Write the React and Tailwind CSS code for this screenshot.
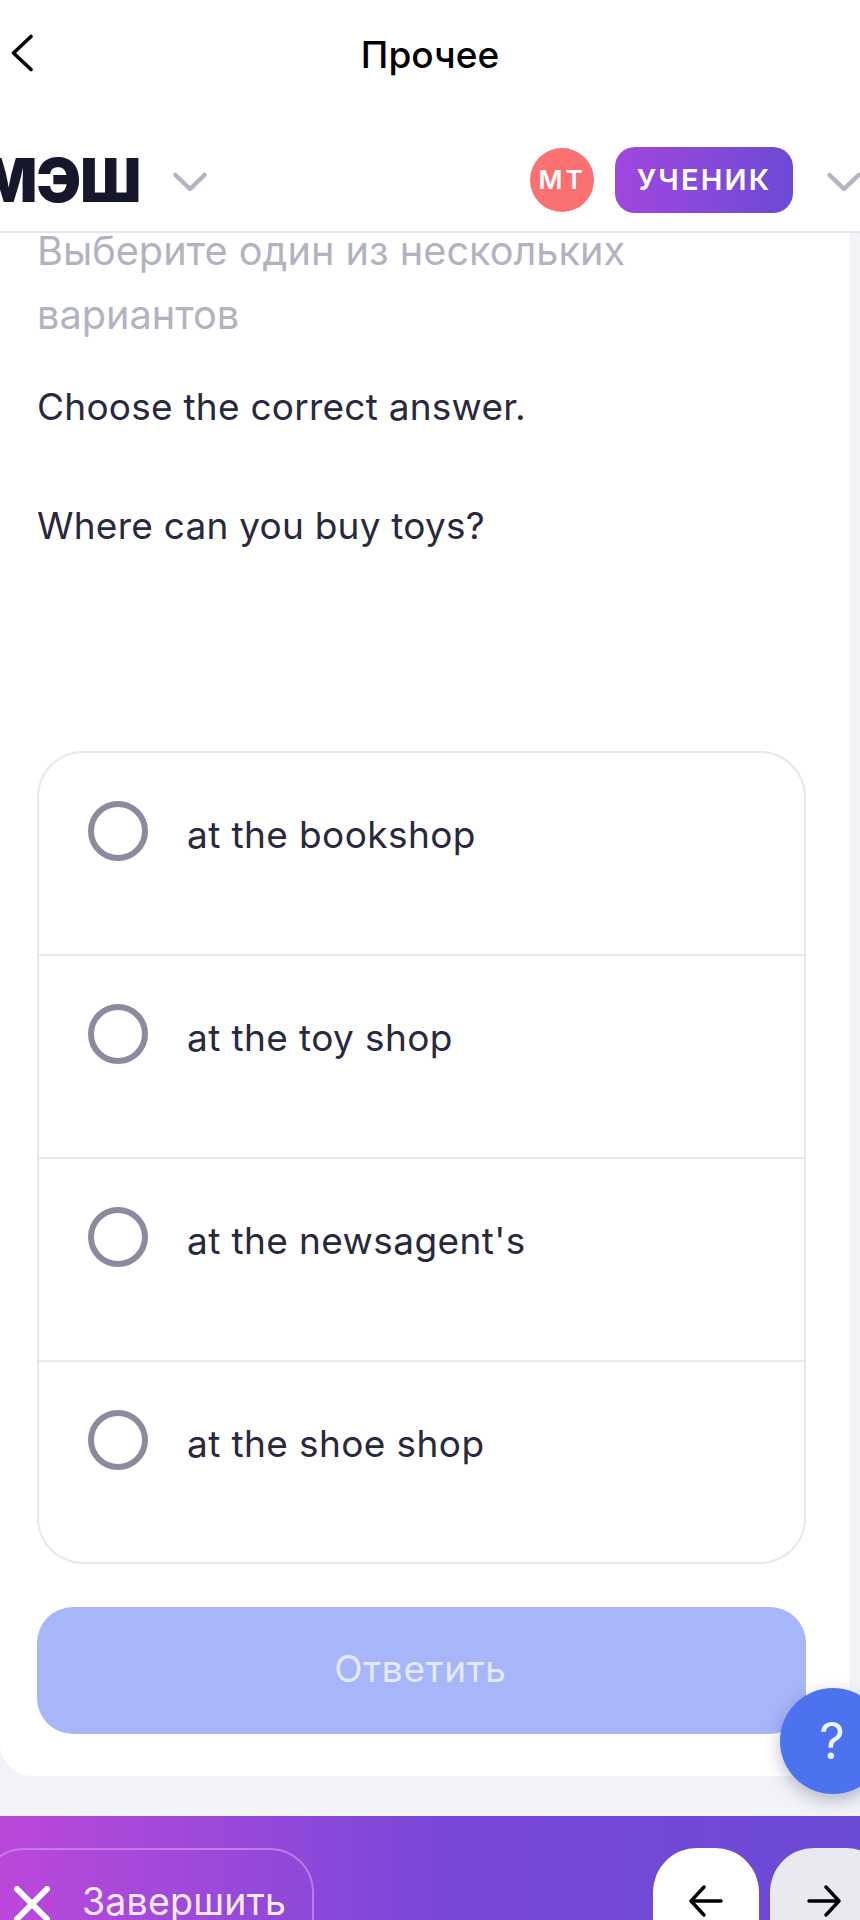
import React from 'react';

const options = ['at the bookshop', 'at the toy shop', "at the newsagent's", 'at the shoe shop'];

function Chevron({ className }) {
  return (
    <svg className={className} viewBox="0 0 34 20" fill="none" stroke="#b3b4c1" strokeWidth="4.5" strokeLinecap="round" strokeLinejoin="round">
      <path d="M2.5 3 L17 17 L31.5 3" />
    </svg>
  );
}

export default function App() {
  return (
    <div className="relative w-[860px] h-[1920px] overflow-hidden flex flex-col bg-[#f2f3f7] font-['Inter',sans-serif] text-[#28293d]">
      {/* top nav */}
      <div className="h-[108px] shrink-0 bg-white relative flex items-center justify-center">
        <svg className="absolute left-[10px] top-[34px] w-[24px] h-[38px]" viewBox="0 0 24 38" fill="none" stroke="#000" strokeWidth="3.6" strokeLinecap="round" strokeLinejoin="round">
          <path d="M21 2.5 L3.5 19 L21 35.5" />
        </svg>
        <span className="text-[37px] font-medium text-black leading-none">Прочее</span>
      </div>

      {/* header */}
      <div className="h-[125px] shrink-0 bg-white border-b-2 border-[#e4e5ea] flex items-center pt-[20px]">
        <span className="ml-[-20px] text-[60px] font-black text-[#16172b] leading-none tracking-[-1px]">МЭШ</span>
        <Chevron className="ml-[33px] mt-[4px] w-[34px] h-[20px]" />
        <div className="ml-auto flex items-center mr-[-1px]">
          <div className="w-[64px] h-[64px] rounded-full bg-[#fb7171] flex items-center justify-center text-white text-[26px] font-semibold tracking-[3px]">МТ</div>
          <div className="ml-[21px] w-[178px] h-[66px] rounded-[20px] bg-gradient-to-r from-[#a046dc] to-[#6c4ad6] flex items-center justify-center text-white text-[29px] font-semibold tracking-[2.2px]">УЧЕНИК</div>
          <Chevron className="ml-[34px] mt-[4px] w-[34px] h-[20px]" />
        </div>
      </div>

      {/* question */}
      <div className="h-[1543px] shrink-0 w-[850px] bg-white rounded-bl-[32px] rounded-br-[32px] pl-[37px] pr-[44px] flex flex-col">
        <p className="text-[39.7px] leading-[64px] text-[#b2b3c0] mt-[-14px]">Выберите один из нескольких<br />вариантов</p>
        <p className="mt-[35px] text-[37px] leading-[50px] font-[430] tracking-[0.24px]">Choose the correct answer.</p>
        <p className="mt-[69px] text-[37px] leading-[50px] font-[430] tracking-[0.24px]">Where can you buy toys?</p>

        <div className="mt-[200px] h-[813px] border-2 border-[#e7e8ed] rounded-[46px] flex flex-col">
          {options.map((text, i) => (
            <div key={text} className={`${i === 0 ? 'h-[201px]' : 'h-[203px] border-t-2 border-[#e7e8ed]'} shrink-0 flex items-start pl-[49px]`}>
              <div className="mt-[48px] w-[60px] h-[60px] rounded-full border-[6px] border-[#8a8b9d]"></div>
              <span className="ml-[39px] mt-[57px] text-[37px] leading-[50px] font-[430] tracking-[0.4px]">{text}</span>
            </div>
          ))}
        </div>

        <button className="mt-[43px] h-[127px] rounded-[36px] bg-[#a6b6f9] text-[#e4e9fd] text-[37px] tracking-[0.7px] flex items-center justify-center pr-[2px] pb-[4px]">Ответить</button>
      </div>

      <div className="h-[40px] shrink-0"></div>

      {/* bottom bar */}
      <div className="flex-1 bg-gradient-to-r from-[#bb47da] via-[#7a47d8] to-[#6b4ad6] pt-[32px] flex items-start">
        <div className="ml-[-20px] w-[334px] h-[120px] rounded-[44px] border-2 border-[#c678e6] flex items-start pl-[32px] pt-[36px]">
          <svg className="w-[36px] h-[36px] shrink-0" viewBox="0 0 36 36" fill="none" stroke="#fff" strokeWidth="6" strokeLinecap="round">
            <path d="M3 3 L33 33 M33 3 L3 33" />
          </svg>
          <span className="ml-[32px] mt-[-6px] text-[37.5px] leading-[44px] text-[#f6e9fb] tracking-[0.2px]">Завершить</span>
        </div>
        <div className="ml-auto flex mr-[-30px] gap-[11px]">
          <div className="w-[106px] h-[120px] rounded-[44px] bg-white flex items-start justify-center pt-[36px]">
            <svg className="w-[34px] h-[34px]" viewBox="0 0 34 34" fill="none" stroke="#000" strokeWidth="3.4" strokeLinecap="round" strokeLinejoin="round">
              <path d="M32 17 H2 M15 3 L2 17 L15 31" />
            </svg>
          </div>
          <div className="w-[120px] h-[120px] rounded-[44px] bg-[#e9eaf0] flex items-start pl-[37px] pt-[36px]">
            <svg className="w-[34px] h-[34px]" viewBox="0 0 34 34" fill="none" stroke="#000" strokeWidth="3.4" strokeLinecap="round" strokeLinejoin="round">
              <path d="M2 17 H32 M19 3 L32 17 L19 31" />
            </svg>
          </div>
        </div>
      </div>

      {/* help button */}
      <div className="absolute left-[780px] top-[1688px] w-[106px] h-[106px] rounded-full bg-[#4c72f0] shadow-[0_6px_16px_rgba(30,40,90,0.3)] flex items-center justify-center text-[#f0f3ff] text-[50px] font-normal">
        <span className="mr-[2px]">?</span>
      </div>
    </div>
  );
}
